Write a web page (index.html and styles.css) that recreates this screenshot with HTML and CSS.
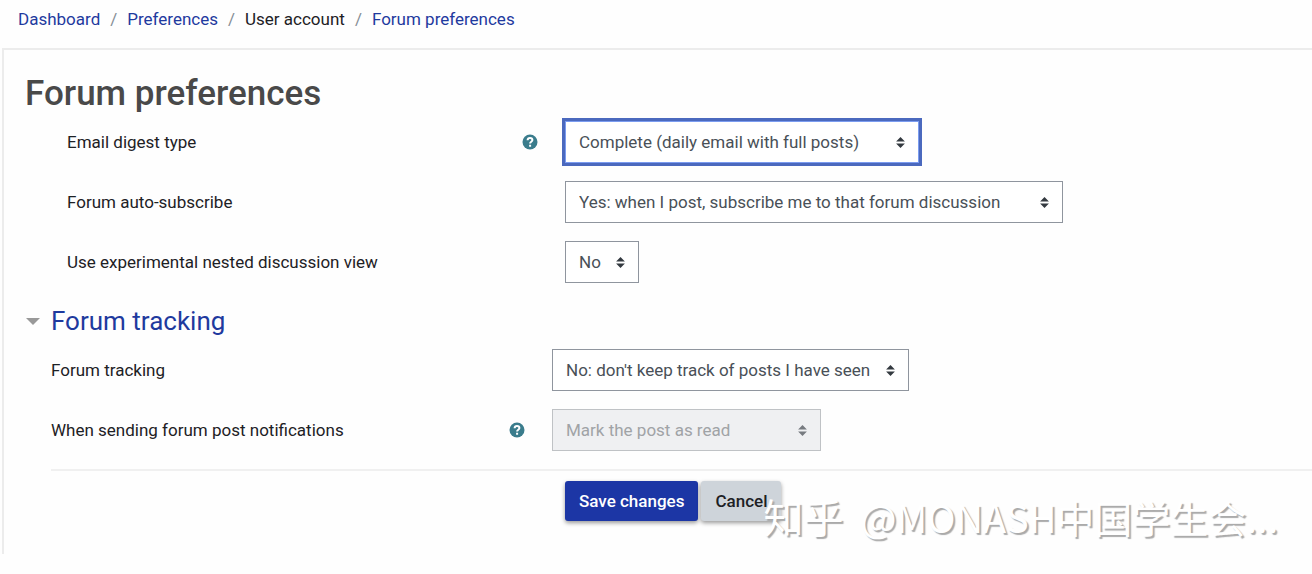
FILE: index.html
```html
<!DOCTYPE html>
<html lang="en">
<head>
    <meta charset="UTF-8">
    <meta name="viewport" content="width=device-width, initial-scale=1.0">
    <title>Forum preferences</title>
    <link rel="stylesheet" href="styles.css">
</head>
<body>
    <nav aria-label="Breadcrumb">
        <ol class="breadcrumb">
            <li><a href="#">Dashboard</a></li>
            <li><a href="#">Preferences</a></li>
            <li>User account</li>
            <li><a href="#">Forum preferences</a></li>
        </ol>
    </nav>

    <main class="card">
        <h2>Forum preferences</h2>
        <form action="#" method="post">
            <div class="general">
                <div class="form-row">
                    <div class="form-label">
                        <label for="maildigest">Email digest type</label>
                        <button type="button" class="help" aria-label="Help with Email digest type">
                            <svg viewBox="0 0 16 16"><circle cx="8" cy="8" r="7.5"/><path d="M5.600 6.300C5.700 4.800 6.700 4.100 8 4.100c1.400 0 2.400.8 2.400 2 0 1.700-2.300 1.700-2.300 3.400M8.100 10.700v2"/></svg>
                        </button>
                    </div>
                    <select id="maildigest" name="maildigest" class="custom-select digest focused">
                        <option>Complete (daily email with full posts)</option>
                    </select>
                </div>
                <div class="form-row">
                    <div class="form-label">
                        <label for="autosubscribe">Forum auto-subscribe</label>
                    </div>
                    <select id="autosubscribe" name="autosubscribe" class="custom-select subscribe">
                        <option>Yes: when I post, subscribe me to that forum discussion</option>
                    </select>
                </div>
                <div class="form-row">
                    <div class="form-label">
                        <label for="nested">Use experimental nested discussion view</label>
                    </div>
                    <select id="nested" name="nested" class="custom-select nested">
                        <option>No</option>
                    </select>
                </div>
            </div>

            <section class="tracking">
                <h3><a href="#trackforums">Forum tracking</a></h3>
                <div class="form-row">
                    <div class="form-label">
                        <label for="trackforums">Forum tracking</label>
                    </div>
                    <select id="trackforums" name="trackforums" class="custom-select track">
                        <option>No: don't keep track of posts I have seen</option>
                    </select>
                </div>
                <div class="form-row">
                    <div class="form-label">
                        <label for="markasread">When sending forum post notifications</label>
                        <button type="button" class="help" aria-label="Help with When sending forum post notifications">
                            <svg viewBox="0 0 16 16"><circle cx="8" cy="8" r="7.5"/><path d="M5.600 6.300C5.700 4.800 6.700 4.100 8 4.100c1.400 0 2.400.8 2.400 2 0 1.700-2.300 1.700-2.300 3.400M8.100 10.700v2"/></svg>
                        </button>
                    </div>
                    <select id="markasread" name="markasread" class="custom-select mark" disabled>
                        <option>Mark the post as read</option>
                    </select>
                </div>
            </section>

            <div class="actions">
                <button type="submit" class="btn btn-primary">Save changes</button>
                <button type="button" class="btn btn-secondary">Cancel</button>
            </div>
        </form>
    </main>

    <div class="watermark" lang="zh">
        <span class="brand">知乎</span>
        <span>@MONASH中国学生会...</span>
    </div>
</body>
</html>
```

FILE: styles.css
```css
* {
    box-sizing: border-box;
}

body {
    margin: 0;
    font-family: Roboto, "Noto Sans CJK SC", sans-serif;
    font-size: 17px;
    line-height: 24px;
    color: #1d2125;
    background-color: #fefefe;
    position: relative;
}

a {
    color: #1f3a9e;
    text-decoration: none;
}

.breadcrumb {
    display: flex;
    flex-wrap: wrap;
    list-style: none;
    margin: 0;
    padding: 7px 18px 17px;
}

.breadcrumb li + li::before {
    content: "/";
    padding: 0 10px;
    color: #868e96;
}

.card {
    margin-left: 2px;
    padding: 24px 0 33px 21px;
    border: 2px solid #ececec;
    border-width: 2px 0 0 2px;
}

h2 {
    margin: 0;
    font-size: 35px;
    font-weight: 500;
    line-height: 40px;
    color: #494949;
}

.general {
    --label-width: 498px;
    padding: 7px 0 0 42px;
}

.tracking {
    --label-width: 501px;
    margin-left: 26px;
    padding-bottom: 18px;
    border-bottom: 2px solid #f0f0f0;
}

.form-row {
    display: grid;
    grid-template-columns: var(--label-width) 1fr;
    align-items: center;
}

.form-row + .form-row {
    margin-top: 18px;
}

.form-label {
    display: flex;
    justify-content: space-between;
    align-items: center;
    padding-right: 27px;
}

.help {
    width: 16px;
    height: 16px;
    padding: 0;
    border: none;
    background: none;
    cursor: pointer;
}

.help svg {
    display: block;
}

.help circle {
    fill: #3a7c8c;
}

.help path {
    fill: none;
    stroke: #fff;
    stroke-width: 2;
}

.custom-select {
    height: 42px;
    padding: 0 30px 0 13px;
    border: 1px solid #8f959e;
    border-radius: 0;
    appearance: none;
    font: inherit;
    color: #495057;
    background: #fff url("data:image/svg+xml,%3csvg xmlns='http://www.w3.org/2000/svg' viewBox='0 0 4 5'%3e%3cpath fill='%23343a40' d='M2 0L0 2h4zm0 5L0 3h4z'/%3e%3c/svg%3e") no-repeat right 13px center / 9px 11px;
}

.custom-select.focused {
    border-color: #7b9cf0;
    box-shadow: 0 0 0 3px #4b69be;
}

.custom-select:disabled {
    color: #a0a3a6;
    border-color: #bfc2c5;
    background-color: #eff0f2;
    background-image: url("data:image/svg+xml,%3csvg xmlns='http://www.w3.org/2000/svg' viewBox='0 0 4 5'%3e%3cpath fill='%23777b80' d='M2 0L0 2h4zm0 5L0 3h4z'/%3e%3c/svg%3e");
    opacity: 1;
}

.digest {
    width: 354px;
}

.subscribe {
    width: 498px;
}

.nested {
    width: 74px;
}

.track {
    width: 357px;
}

.mark {
    width: 269px;
}

h3 {
    position: relative;
    margin: 0;
    padding: 22px 0 12px;
    font-size: 26px;
    font-weight: 400;
    line-height: 32px;
}

/* expand/collapse arrow hanging left of the section title */
h3::before {
    content: "";
    position: absolute;
    left: -25px;
    top: 35px;
    border: 7px solid transparent;
    border-top-color: #999;
    border-bottom: 0;
}

.actions {
    display: flex;
    gap: 3px;
    padding: 10px 0 0 540px;
}

.btn {
    height: 40px;
    padding: 0 14px;
    border: none;
    border-radius: 3px;
    font: inherit;
    font-weight: 500;
    box-shadow: 0 2px 4px rgba(0, 0, 0, 0.4);
    cursor: pointer;
}

.btn-primary {
    color: #fff;
    background-color: #1c36a5;
}

.btn-secondary {
    color: #1d2125;
    background-color: #ced4da;
}

.watermark {
    display: flex;
    align-items: baseline;
    gap: 17px;
    position: absolute;
    right: 34px;
    bottom: 13px;
    font-family: "Noto Sans CJK SC", sans-serif;
    font-size: 38px;
    line-height: 48px;
    color: #fff;
    text-shadow: 2px 2px 1px #aaa;
    white-space: nowrap;
    pointer-events: none;
}

.watermark .brand {
    font-size: 40px;
}
```
